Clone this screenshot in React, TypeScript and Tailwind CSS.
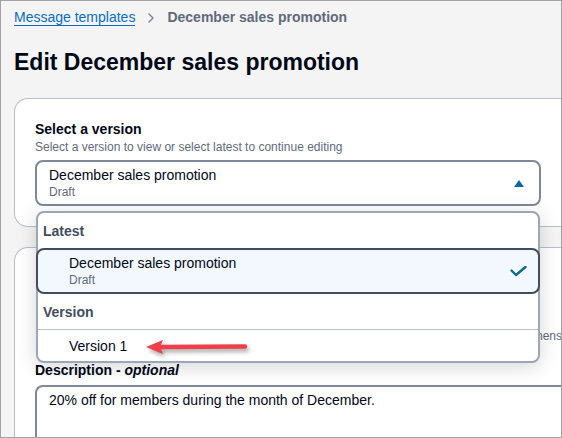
import { ChevronRight } from "lucide-react";

const font = { fontFamily: '"Liberation Sans", Arial, sans-serif' };

function CaretUp() {
  return (
    <svg width="10" height="7" viewBox="0 0 10 7" className="shrink-0">
      <path d="M5 0 L10 7 L0 7 Z" fill="#0b65a0" />
    </svg>
  );
}

function Check() {
  return (
    <svg width="17" height="11" viewBox="0 0 17 11" className="shrink-0">
      <path
        d="M1.5 4.5 L6 9 L15.5 1"
        fill="none"
        stroke="#0f6b8c"
        strokeWidth="2.4"
        strokeLinecap="round"
        strokeLinejoin="round"
      />
    </svg>
  );
}

function VersionDropdown() {
  return (
    <div className="absolute left-[1px] top-[51px] z-10 w-[504px] rounded-lg border-2 border-[#9ba7b6] bg-white shadow-[0_4px_20px_rgba(0,7,22,0.16)]">
      {/* Latest group */}
      <div className="flex h-[35px] items-center pl-[5px] text-[14px] font-bold leading-[18px] text-[#414d5c]">
        Latest
      </div>
      <div className="-mx-[2px] flex h-[46px] items-center justify-between rounded-lg border-2 border-[#414d5c] bg-[#f2f8fd] pl-[31px] pr-[11px]">
        <div className="flex flex-col">
          <span className="text-[14px] leading-[18px] text-[#000716]">December sales promotion</span>
          <span className="text-[12px] leading-[16px] text-[#5f6b7a]">Draft</span>
        </div>
        <Check />
      </div>

      {/* Version group */}
      <div className="flex h-[36px] items-center border-b border-[#b6bec9] pl-[5px] text-[14px] font-bold leading-[18px] text-[#414d5c]">
        Version
      </div>
      <div className="flex h-[31px] items-center pl-[31px] text-[14px] leading-[18px] text-[#000716]">
        Version 1
      </div>
    </div>
  );
}

export default function App() {
  return (
    <div
      className="relative h-[438px] w-[562px] overflow-hidden border border-[#a3a3a3] bg-[#f4f4f4]"
      style={font}
    >
      <div className="w-[620px] pl-[13px] pt-[8px]">
        {/* Breadcrumb */}
        <nav className="flex h-[17px] items-start">
          <span className="inline-block border-b border-[#0a6cbf] text-[14px] leading-[16px] text-[#0a6cbf]">
            Message templates
          </span>
          <ChevronRight className="ml-[8px] mr-[8px] mt-[1px] h-[16px] w-[16px] text-[#7d8998]" strokeWidth={2.2} />
          <span className="text-[14px] font-bold leading-[16px] text-[#5f6b7a]">December sales promotion</span>
        </nav>

        {/* Title */}
        <h1 className="mt-[22px] text-[23px] font-bold leading-[28px] text-[#000716]">
          Edit December sales promotion
        </h1>

        {/* Version card */}
        <section className="mt-[22px] rounded-l-[14px] border border-r-0 border-[#b6bec9] bg-white pb-[20px] pl-[20px] pt-[21px]">
          <h2 className="text-[14px] font-bold leading-[18px] text-[#000716]">Select a version</h2>
          <p className="mt-[1px] text-[12px] leading-[16px] text-[#5f6b7a]">
            Select a version to view or select latest to continue editing
          </p>
          <div className="relative mt-[5px] w-[506px]">
            <div className="flex h-[46px] items-center justify-between rounded-lg border-2 border-[#7d8998] bg-white pl-[12px] pr-[15px]">
              <div className="flex flex-col">
                <span className="text-[14px] leading-[18px] text-[#000716]">December sales promotion</span>
                <span className="text-[12px] leading-[16px] text-[#5f6b7a]">Draft</span>
              </div>
              <CaretUp />
            </div>
            <VersionDropdown />
          </div>
        </section>

        {/* Details card */}
        <section className="mt-[20px] h-[200px] rounded-tl-[14px] border border-r-0 border-[#b6bec9] bg-white pl-[20px] pt-[42px]">
          <div className="ml-[6px] h-[34px] w-[480px] rounded-lg border-2 border-[#7d8998]" />
          <p className="mt-[4px] w-[527px] whitespace-nowrap text-right text-[12px] leading-[16px] text-[#5f6b7a]">
            Valid characters are A-Z, a-z, 0-9, underscores (_), and hyphens
          </p>
          <label className="mt-[17px] block text-[14px] font-bold leading-[18px] text-[#000716]">
            Description - <em className="italic">optional</em>
          </label>
          <div className="mt-[6px] h-[80px] w-[560px] rounded-tl-lg border-2 border-r-0 border-[#7d8998] px-[12px] pt-[4px] text-[14px] leading-[18px] text-[#000716]">
            20% off for members during the month of December.
          </div>
        </section>
      </div>

      {/* Annotation arrow */}
      <svg
        className="absolute left-[140px] top-[334px] z-20 drop-shadow-[2px_3px_2px_rgba(0,0,0,0.35)]"
        width="112"
        height="24"
        viewBox="0 0 112 24"
      >
        <path d="M104 11.5 L20 12" stroke="#ee3f4a" strokeWidth="4.5" strokeLinecap="round" />
        <path d="M5 12 L22 5 L19 12 L22 19 Z" fill="#ee3f4a" />
      </svg>
    </div>
  );
}
